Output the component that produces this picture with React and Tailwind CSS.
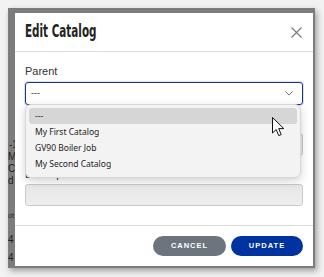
import React from "react";

const options = ["---", "My First Catalog", "GV90 Boiler Job", "My Second Catalog"];

const Cursor = () => (
    <svg width="13" height="20" viewBox="0 0 13 20" className="absolute left-[257px] top-[65px]">
        <path
            d="M0.5 0.5 L0.5 16 L4.2 12.5 L6.8 18.6 L9.2 17.6 L6.7 11.6 L11.8 11.6 Z"
            fill="#fff"
            stroke="#111"
            strokeWidth="1"
            strokeLinejoin="round"
        />
    </svg>
);

const App = () => {
    return (
        <div className="w-[324px] h-[277px] bg-[#f2f2f2] overflow-hidden pt-[8px] pl-[8px]">
            {/* backdrop frame */}
            <div className="relative w-[307px] h-[260px] bg-[#7c7c7c] shadow-[2px_3px_6px_rgba(0,0,0,0.35)] flex">
                {/* bits of the page behind */}
                <div
                    className="w-[7px] shrink-0 overflow-hidden text-[10px] leading-none text-[#1d1d1d] flex flex-col pt-[132px] gap-[2px]"
                    style={{ fontFamily: "'Liberation Sans', Arial, sans-serif" }}
                >
                    <span className="pl-[1px]">-1</span>
                    <span>M</span>
                    <span>C</span>
                    <span>d</span>
                    <span className="mt-[24px] text-[7px]">ot</span>
                    <span className="mt-[14px]">4</span>
                    <span className="mt-[6px]">4</span>
                </div>

                <div
                    className="relative mt-[5px] w-[298px] h-[253px] bg-white flex flex-col"
                    style={{ fontFamily: "'Liberation Sans', Arial, sans-serif" }}
                >
                    {/* header */}
                    <div className="h-[39px] shrink-0 flex items-center justify-between pl-[10px] pr-[10px] border-b border-[#dcdcdc]">
                        <h2
                            className="text-[17px] font-bold text-[#222] origin-left scale-x-[0.68] whitespace-nowrap"
                            style={{ fontFamily: "'DejaVu Sans Condensed', 'Liberation Sans Narrow', sans-serif" }}
                        >
                            Edit Catalog
                        </h2>
                        <svg width="11" height="11" viewBox="0 0 11 11" className="mr-[1px]">
                            <path d="M0.5 0.5 L10.5 10.5 M10.5 0.5 L0.5 10.5" stroke="#777" strokeWidth="1.1" />
                        </svg>
                    </div>

                    {/* body */}
                    <div className="relative flex-1 px-[10px] pt-[12px] flex flex-col gap-[10px]">
                        <div className="flex flex-col gap-[4px]">
                            <label className="text-[11px] leading-[14px] text-[#333]">Parent</label>
                            <div className="h-[23px] rounded-[3px] border border-[#18368f] shadow-[0_0_0_1px_rgba(24,54,143,0.15)] flex items-center justify-between pl-[5px] pr-[9px]">
                                <span className="text-[9px] text-[#333]">---</span>
                                <svg width="8" height="5" viewBox="0 0 8 5">
                                    <path d="M0.5 0.5 L4 4 L7.5 0.5" fill="none" stroke="#777" strokeWidth="1" />
                                </svg>
                            </div>
                        </div>

                        <div className="flex flex-col gap-[4px]">
                            <label className="text-[11px] leading-[14px] text-[#333]">Name</label>
                            <div className="h-[23px] rounded-[3px] border border-[#c9c9c9] bg-[#e9e9e9]" />
                        </div>

                        <div className="flex flex-col gap-[1px]">
                            <label className="text-[11px] leading-[17px] text-[#333]">Description</label>
                            <div className="h-[22px] rounded-[3px] border border-[#c9c9c9] bg-gradient-to-b from-[#e6e6e6] to-[#efefef]" />
                        </div>

                        {/* open dropdown list */}
                        <div className="absolute left-[10px] top-[52px] w-[276px] h-[74px] rounded-[6px] bg-[#f3f3f3] border border-[#d6d6d6] shadow-[0_3px_8px_rgba(0,0,0,0.18)] p-[3px] flex flex-col">
                            {options.map((opt, i) => (
                                <div
                                    key={i}
                                    className={
                                        i === 0
                                            ? "h-[16px] shrink-0 rounded-[3px] bg-[#d6d6d6] flex items-center pl-[6px] text-[8.5px] text-[#222]"
                                            : "h-[16px] shrink-0 flex items-center pl-[6px] text-[8.5px] text-[#222]"
                                    }
                                    style={{ fontFamily: "'Noto Sans', 'Open Sans', sans-serif" }}
                                >
                                    {opt}
                                </div>
                            ))}
                        </div>

                        <Cursor />
                    </div>

                    {/* footer */}
                    <div className="h-[41px] shrink-0 border-t border-[#dcdcdc] flex items-center justify-end gap-[5px] pr-[10px]">
                        <button className="w-[73px] h-[20px] rounded-full bg-[#6c757d] text-white text-[7.5px] font-bold tracking-[1px]">
                            CANCEL
                        </button>
                        <button className="w-[72px] h-[20px] rounded-full bg-[#0033a0] text-white text-[7.5px] font-bold tracking-[1px]">
                            UPDATE
                        </button>
                    </div>
                </div>
            </div>
        </div>
    );
};

export default App;
